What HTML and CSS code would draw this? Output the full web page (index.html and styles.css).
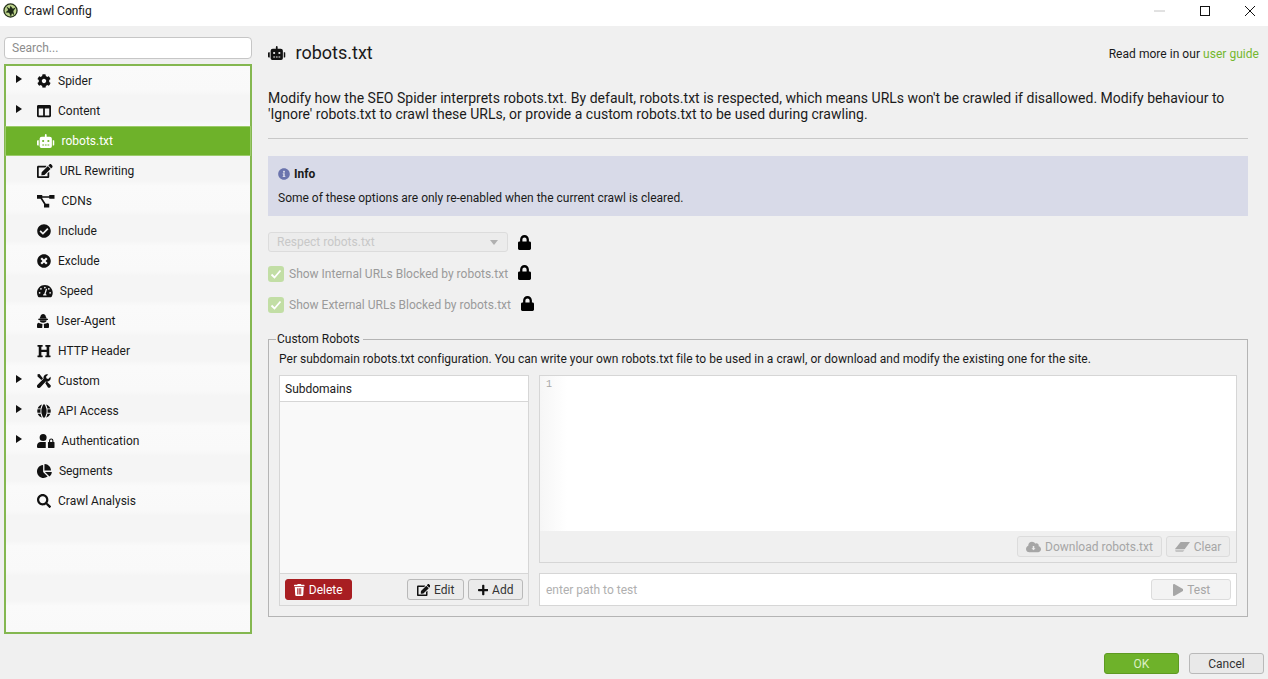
FILE: index.html
```html
<!DOCTYPE html>
<html lang="en">
<head>
<meta charset="utf-8">
<title>Crawl Config</title>
<link rel="stylesheet" href="styles.css">
</head>
<body>
<svg class="defs" aria-hidden="true">
  <defs>
    <symbol id="robot" viewBox="0 0 640 512"><path d="M32,224H64V416H32A31.96166,31.96166,0,0,1,0,384V256A31.96166,31.96166,0,0,1,32,224Zm512-48V448a64.06328,64.06328,0,0,1-64,64H160a64.06328,64.06328,0,0,1-64-64V176a79.974,79.974,0,0,1,80-80H288V32a32,32,0,0,1,64,0V96H464A79.974,79.974,0,0,1,544,176ZM264,256a40,40,0,1,0-40,40A39.997,39.997,0,0,0,264,256Zm-8,128H192v32h64Zm96,0H288v32h64ZM456,256a40,40,0,1,0-40,40A39.997,39.997,0,0,0,456,256Zm-8,128H384v32h64ZM640,256V384a31.96166,31.96166,0,0,1-32,32H576V224h32A31.96166,31.96166,0,0,1,640,256Z"/></symbol>
    <symbol id="edit" viewBox="0 0 576 512"><path d="M402.6 83.2l90.2 90.2c3.8 3.8 3.8 10 0 13.8L274.4 405.6l-92.8 10.3c-12.4 1.4-22.9-9.1-21.5-21.5l10.3-92.8L388.8 83.2c3.8-3.8 10-3.8 13.8 0zm162-22.9l-48.8-48.8c-15.2-15.2-39.9-15.2-55.2 0l-35.4 35.4c-3.8 3.8-3.8 10 0 13.8l90.2 90.2c3.8 3.8 10 3.8 13.8 0l35.4-35.4c15.2-15.3 15.2-40 0-55.2zM384 346.2V448H64V128h229.8c3.2 0 6.2-1.3 8.5-3.5l40-40c7.6-7.6 2.2-20.5-8.5-20.5H48C21.5 64 0 85.5 0 112v352c0 26.5 21.5 48 48 48h352c26.5 0 48-21.5 48-48V306.2c0-10.7-12.9-16-20.5-8.5l-40 40c-2.2 2.3-3.5 5.3-3.5 8.5z"/></symbol>
    <symbol id="lock" viewBox="0 0 448 512"><path d="M400 224h-24v-72C376 68.2 307.8 0 224 0S72 68.2 72 152v72H48c-26.5 0-48 21.5-48 48v192c0 26.5 21.5 48 48 48h352c26.5 0 48-21.5 48-48V272c0-26.5-21.5-48-48-48zm-104 0H152v-72c0-39.7 32.3-72 72-72s72 32.3 72 72v72z"/></symbol>
  </defs>
</svg>

<div class="app">
  <header class="titlebar">
    <div class="title">
      <svg class="logo" viewBox="0 0 16 16"><circle cx="8" cy="8" r="7" fill="#bcd28a" stroke="#26331c" stroke-width="1.400"/><path d="M8 3 10.500 6 14 4.500 11 8.500 12 13 9.500 11 8.500 15 6.500 10.500 2.500 10 5.500 7.500 3.500 3.500 7 6z" fill="#1d2a17"/></svg>
      <span>Crawl Config</span>
    </div>
    <div class="winctl">
      <svg viewBox="0 0 12 12"><path d="M0 6h11" stroke="#c4c4c4" fill="none"/></svg>
      <svg viewBox="0 0 12 12"><rect x="1.500" y="1.500" width="9" height="9" fill="none" stroke="#111"/></svg>
      <svg viewBox="0 0 12 12"><path d="M1 1l10 10M11 1L1 11" fill="none" stroke="#111"/></svg>
    </div>
  </header>

  <div class="content">
    <aside class="sidebar">
      <input class="search" type="text" placeholder="Search...">
      <ul class="tree">
        <li class="row"><span class="slot"><i class="arrow"></i></span><svg class="ico" viewBox="0 0 512 512"><path d="M487.4 315.7l-42.6-24.6c4.3-23.2 4.3-47 0-70.2l42.6-24.6c4.9-2.8 7.1-8.6 5.5-14-11.1-35.6-30-67.8-54.7-94.6-3.8-4.1-10-5.1-14.8-2.3L380.8 110c-17.9-15.4-38.5-27.3-60.8-35.1V25.8c0-5.6-3.9-10.5-9.4-11.7-36.7-8.2-74.3-7.8-109.2 0-5.5 1.2-9.4 6.1-9.4 11.7V75c-22.2 7.9-42.8 19.8-60.8 35.1L88.7 85.5c-4.9-2.8-11-1.9-14.8 2.3-24.7 26.7-43.6 58.9-54.7 94.6-1.7 5.4.6 11.2 5.5 14L67.3 221c-4.3 23.2-4.3 47 0 70.2l-42.6 24.6c-4.9 2.8-7.1 8.6-5.5 14 11.1 35.6 30 67.8 54.7 94.6 3.8 4.1 10 5.1 14.8 2.3l42.6-24.6c17.9 15.4 38.5 27.3 60.8 35.1v49.2c0 5.6 3.9 10.5 9.4 11.7 36.7 8.2 74.3 7.8 109.2 0 5.5-1.2 9.4-6.1 9.4-11.7v-49.2c22.2-7.9 42.8-19.8 60.8-35.1l42.6 24.6c4.9 2.8 11 1.9 14.8-2.3 24.7-26.7 43.6-58.9 54.7-94.6 1.5-5.5-.7-11.3-5.6-14.1zM256 336c-44.1 0-80-35.9-80-80s35.9-80 80-80 80 35.9 80 80-35.9 80-80 80z"/></svg>Spider</li>
        <li class="row"><span class="slot"><i class="arrow"></i></span><svg class="ico" viewBox="0 0 512 512"><path d="M464 32H48C21.49 32 0 53.49 0 80v352c0 26.51 21.49 48 48 48h416c26.51 0 48-21.49 48-48V80c0-26.51-21.49-48-48-48zM224 416H64V160h160v256zm224 0H288V160h160v256z"/></svg>Content</li>
        <li class="row selected"><span class="slot"></span><svg class="ico" viewBox="0 0 640 512"><use href="#robot"/></svg>robots.txt</li>
        <li class="row"><span class="slot"></span><svg class="ico" viewBox="0 0 576 512"><use href="#edit"/></svg>URL Rewriting</li>
        <li class="row"><span class="slot"></span><svg class="ico" viewBox="0 0 640 512"><path d="M0 32h192v144H0zM448 32h192v144H448zM256 352h192v144H256zM180 78h280v56H180zM130 170l56-28 140 220-56 28z"/></svg>CDNs</li>
        <li class="row"><span class="slot"></span><svg class="ico" viewBox="0 0 512 512"><path d="M504 256c0 136.967-111.033 248-248 248S8 392.967 8 256 119.033 8 256 8s248 111.033 248 248zM227.314 387.314l184-184c6.248-6.248 6.248-16.379 0-22.627l-22.627-22.627c-6.248-6.249-16.379-6.249-22.628 0L216 308.118l-70.059-70.059c-6.248-6.248-16.379-6.248-22.628 0l-22.627 22.627c-6.248 6.248-6.248 16.379 0 22.627l104 104c6.249 6.249 16.379 6.249 22.628.001z"/></svg>Include</li>
        <li class="row"><span class="slot"></span><svg class="ico" viewBox="0 0 512 512"><path d="M256 8C119 8 8 119 8 256s111 248 248 248 248-111 248-248S393 8 256 8zm121.6 313.1c4.7 4.7 4.7 12.3 0 17L338 377.6c-4.7 4.7-12.3 4.7-17 0L256 312l-65.1 65.6c-4.7 4.7-12.3 4.7-17 0L134.4 338c-4.7-4.7-4.7-12.3 0-17l65.6-65-65.6-65.1c-4.7-4.7-4.7-12.3 0-17l39.6-39.6c4.7-4.7 12.3-4.7 17 0l65 65.7 65.1-65.6c4.7-4.7 12.3-4.7 17 0l39.6 39.6c4.7 4.7 4.7 12.3 0 17L312 256l65.6 65.1z"/></svg>Exclude</li>
        <li class="row"><span class="slot"></span><svg class="ico" viewBox="0 0 576 512"><path fill-rule="evenodd" d="M288 32C129 32 0 161 0 320c0 53 14 103 39 146 6 10 17 14 28 14h442c11 0 22-4 28-14 25-43 39-93 39-146C576 161 447 32 288 32zM288 96a32 32 0 1 1 0 64 32 32 0 0 1 0-64zM144 144a32 32 0 1 1 0 64 32 32 0 0 1 0-64zM96 288a32 32 0 1 1 0 64 32 32 0 0 1 0-64zM352 416H224c0-30 18-55 44-60l50-166c4-13 18-20 31-16 13 4 20 18 16 31l-50 160c22 10 37 29 37 51zM480 288a32 32 0 1 1 0 64 32 32 0 0 1 0-64zM432 144a32 32 0 1 1 0 64 32 32 0 0 1 0-64z"/></svg>Speed</li>
        <li class="row"><span class="slot"></span><svg class="ico" viewBox="0 0 448 512"><path fill-rule="evenodd" d="M224 0c-50 0-88 30-100 100L90 160H358L324 100C312 30 274 0 224 0zM48 176H400V216H48zM96 232H352c0 55-50 90-128 90s-128-35-128-90zM60 322c30 15 50 24 70 28l70 20-10 142H40c-22 0-40-18-40-40v-70c0-36 24-66 60-80zM388 322c-30 15-50 24-70 28l-70 20 10 142h150c22 0 40-18 40-40v-70c0-36-24-66-60-80z"/></svg>User-Agent</li>
        <li class="row"><span class="slot"></span><svg class="ico" viewBox="0 0 512 512"><path d="M448 96v320h32a16 16 0 0 1 16 16v32a16 16 0 0 1-16 16H320a16 16 0 0 1-16-16v-32a16 16 0 0 1 16-16h32V288H160v128h32a16 16 0 0 1 16 16v32a16 16 0 0 1-16 16H32a16 16 0 0 1-16-16v-32a16 16 0 0 1 16-16h32V96H32a16 16 0 0 1-16-16V48a16 16 0 0 1 16-16h160a16 16 0 0 1 16 16v32a16 16 0 0 1-16 16h-32v112h192V96h-32a16 16 0 0 1-16-16V48a16 16 0 0 1 16-16h160a16 16 0 0 1 16 16v32a16 16 0 0 1-16 16z"/></svg>HTTP Header</li>
        <li class="row"><span class="slot"><i class="arrow"></i></span><svg class="ico" viewBox="0 0 512 512"><path d="M20 10l70-10 130 160-60 60L20 90zM350 10a130 130 0 0 1 60 10l-80 80 20 60 60 20 80-80a130 130 0 0 1-170 170L120 490a60 60 0 0 1-100-100L240 170A130 130 0 0 1 350 10zM300 330l60-60 130 130a64 64 0 0 1-90 90z"/></svg>Custom</li>
        <li class="row"><span class="slot"><i class="arrow"></i></span><svg class="ico" viewBox="0 0 512 512"><path d="M336 160C320 70 285 8 256 8s-64 62-80 152zM160 256c0 32 2 60 6 96h180c4-36 6-64 6-96s-2-60-6-96H166c-4 36-6 64-6 96zM488 160C460 90 400 36 328 16c26 36 44 88 52 144zM184 16C112 36 52 90 24 160h108c8-56 26-108 52-144zM496 192H384c2 32 2 96 0 128h112c10-40 10-88 0-128zM128 256c0-22 1-44 3-64H16c-10 40-10 88 0 128h115c-2-20-3-42-3-64zM176 352c16 90 51 152 80 152s64-62 80-152zM328 496c72-20 132-74 160-144H380c-8 56-26 108-52 144zM24 352c28 70 88 124 160 144-26-36-44-88-52-144z"/></svg>API Access</li>
        <li class="row"><span class="slot"><i class="arrow"></i></span><svg class="ico" viewBox="0 0 640 512"><path d="M224 256a128 128 0 1 0 0-256 128 128 0 0 0 0 256zM320 320c0-10 2-20 5-28H134C60 292 0 352 0 426v38c0 26 22 48 48 48h272zM624 288h-24v-48a80 80 0 0 0-160 0v48h-24c-9 0-16 7-16 16v192c0 9 7 16 16 16h208c9 0 16-7 16-16V304c0-9-7-16-16-16zM560 288h-80v-48a40 40 0 0 1 80 0z"/></svg>Authentication</li>
        <li class="row"><span class="slot"></span><svg class="ico" viewBox="0 0 544 512"><path d="M527 288H290l158 158c6 6 16 7 23 1 39-36 65-85 73-141 1-9-8-18-17-18zM512 224C504 105 407 8 288 0c-9-1-16 7-16 16v224h224c9 0 17-7 16-16zM224 288V51c0-9-8-17-17-16C88 52-4 155 0 279c4 128 114 233 242 233 50 0 97-16 135-43 8-5 8-16 2-23z"/></svg>Segments</li>
        <li class="row"><span class="slot"></span><svg class="ico" viewBox="0 0 512 512"><path d="M505 442.7L405.3 343c-4.5-4.5-10.6-7-17-7H372c27.6-35.3 44-79.7 44-128C416 93.1 322.9 0 208 0S0 93.1 0 208s93.1 208 208 208c48.3 0 92.7-16.4 128-44v16.3c0 6.4 2.5 12.5 7 17l99.7 99.7c9.4 9.4 24.6 9.4 33.9 0l28.3-28.3c9.4-9.4 9.4-24.6.1-34zM208 336c-70.7 0-128-57.2-128-128 0-70.7 57.2-128 128-128 70.7 0 128 57.2 128 128 0 70.7-57.2 128-128 128z"/></svg>Crawl Analysis</li>
      </ul>
    </aside>

    <main class="main">
      <div class="head">
        <h1 class="heading"><svg class="ico-h" viewBox="0 0 640 512"><use href="#robot"/></svg>robots.txt</h1>
        <p class="more">Read more in our <a href="#">user guide</a></p>
      </div>
      <p class="intro">Modify how the SEO Spider interprets robots.txt. By default, robots.txt is respected, which means URLs won't be crawled if disallowed. Modify behaviour to 'Ignore' robots.txt to crawl these URLs, or provide a custom robots.txt to be used during crawling.</p>
      <hr class="rule">
      <section class="info">
        <div class="info-title"><svg class="ico-info" viewBox="0 0 512 512"><path d="M256 8C119.043 8 8 119.083 8 256c0 136.997 111.043 248 248 248s248-111.003 248-248C504 119.083 392.957 8 256 8zm0 110c23.196 0 42 18.804 42 42s-18.804 42-42 42-42-18.804-42-42 18.804-42 42-42zm56 254c0 6.627-5.373 12-12 12h-88c-6.627 0-12-5.373-12-12v-24c0-6.627 5.373-12 12-12h12v-64h-12c-6.627 0-12-5.373-12-12v-24c0-6.627 5.373-12 12-12h64c6.627 0 12 5.373 12 12v100h12c6.627 0 12 5.373 12 12v24z"/></svg>Info</div>
        <div class="info-text">Some of these options are only re-enabled when the current crawl is cleared.</div>
      </section>

      <div class="option combo-row">
        <div class="combo"><span>Respect robots.txt</span><i class="combo-arrow"></i></div>
        <svg class="ico-lock" viewBox="0 0 448 512"><use href="#lock"/></svg>
      </div>
      <div class="option check-row">
        <span class="check"><svg viewBox="0 0 16 16"><path d="M3.500 8.500l3 3 6-7" fill="none" stroke="#fff" stroke-width="1.800"/></svg></span>
        <span class="check-label">Show Internal URLs Blocked by robots.txt</span>
        <svg class="ico-lock" viewBox="0 0 448 512"><use href="#lock"/></svg>
      </div>
      <div class="option check-row">
        <span class="check"><svg viewBox="0 0 16 16"><path d="M3.500 8.500l3 3 6-7" fill="none" stroke="#fff" stroke-width="1.800"/></svg></span>
        <span class="check-label">Show External URLs Blocked by robots.txt</span>
        <svg class="ico-lock" viewBox="0 0 448 512"><use href="#lock"/></svg>
      </div>

      <fieldset class="group">
        <legend>Custom Robots</legend>
        <p class="group-text">Per subdomain robots.txt configuration. You can write your own robots.txt file to be used in a crawl, or download and modify the existing one for the site.</p>
        <div class="panes">
          <div class="subdomains">
            <div class="sub-head">Subdomains</div>
            <div class="sub-list"></div>
            <div class="sub-foot">
              <button class="btn btn-danger"><svg class="ico-btn" viewBox="0 0 448 512"><path d="M432 32H312l-9.400-18.700A24 24 0 0 0 281.100 0H166.800a23.720 23.720 0 0 0-21.400 13.300L136 32H16A16 16 0 0 0 0 48v32a16 16 0 0 0 16 16h416a16 16 0 0 0 16-16V48a16 16 0 0 0-16-16zM53.200 467a48 48 0 0 0 47.900 45h245.800a48 48 0 0 0 47.900-45L416 128H32zM140 180v270h40V180zM204 180v270h40V180zM268 180v270h40V180z" fill-rule="evenodd"/></svg>Delete</button>
              <span class="spacer"></span>
              <button class="btn btn-edit"><svg class="ico-btn" viewBox="0 0 576 512"><use href="#edit"/></svg>Edit</button>
              <button class="btn btn-add"><svg class="ico-btn" viewBox="0 0 448 512"><path d="M416 208H272V64c0-17.670-14.330-32-32-32h-32c-17.670 0-32 14.330-32 32v144H32c-17.670 0-32 14.330-32 32v32c0 17.670 14.330 32 32 32h144v144c0 17.670 14.330 32 32 32h32c17.670 0 32-14.330 32-32V304h144c17.670 0 32-14.330 32-32v-32c0-17.670-14.330-32-32-32z"/></svg>Add</button>
            </div>
          </div>
          <div class="editor-col">
            <div class="editor">
              <div class="code"><span class="gutter">1</span></div>
              <div class="editor-foot">
                <button class="btn btn-off btn-download"><svg class="ico-btn" viewBox="0 0 640 512"><path fill-rule="evenodd" d="M537.600 226.600c4.100-10.700 6.400-22.400 6.400-34.600 0-53-43-96-96-96-19.700 0-38.100 6-53.300 16.200C367 64.200 315.300 32 256 32c-88.400 0-160 71.600-160 160 0 2.700.1 5.400.2 8.100C40.200 219.800 0 273.200 0 336c0 79.500 64.500 144 144 144h368c70.700 0 128-57.300 128-128 0-61.900-44-113.600-102.400-125.400zM288 208v96h-56l88 88 88-88h-56v-96z"/></svg>Download robots.txt</button>
                <button class="btn btn-off btn-clear"><svg class="ico-btn" viewBox="0 0 640 512"><path d="M240 40h400L420 340H0z"/><path d="M0 360h410l-70 110H30z" opacity=".55"/></svg>Clear</button>
              </div>
            </div>
            <div class="test-bar">
              <input class="test-input" type="text" placeholder="enter path to test">
              <button class="btn btn-off btn-test"><svg class="ico-btn" viewBox="0 0 448 512"><path d="M424.400 214.700L72.400 6.600C43.800-10.300 0 6.100 0 47.900V464c0 37.500 40.700 60.100 72.400 41.300l352-208c31.400-18.500 31.500-64.100 0-82.600z"/></svg>Test</button>
            </div>
          </div>
        </div>
      </fieldset>
    </main>
  </div>

  <footer class="actions">
    <button class="btn-action btn-ok">OK</button>
    <button class="btn-action">Cancel</button>
  </footer>
</div>
</body>
</html>
```

FILE: styles.css
```css
* { box-sizing: border-box; }
html, body { margin: 0; padding: 0; }
body {
  width: 1268px;
  height: 679px;
  overflow: hidden;
  background: #f0f0f0;
  color: #1a1a1a;
  font: 12px/16px Roboto, "Liberation Sans", sans-serif;
}
.defs { display: none; }
.app { display: flex; flex-direction: column; height: 679px; }

.titlebar {
  height: 26px;
  flex: none;
  background: #fff;
  display: flex;
  justify-content: space-between;
  align-items: center;
  padding: 0 12px 5px 3px;
}
.title { display: flex; align-items: center; gap: 6px; }
.logo { width: 15px; height: 15px; }
.winctl { display: flex; gap: 33px; }
.winctl svg { width: 12px; height: 12px; display: block; }

.content { flex: 1; display: flex; min-height: 0; }
.sidebar { width: 248px; margin: 11px 0 0 4px; flex: none; display: flex; flex-direction: column; }
.search {
  width: 248px;
  height: 22px;
  border: 1px solid #c6c6c6;
  border-radius: 4px;
  background: #fff;
  padding: 0 7px;
  font: inherit;
  color: #222;
  outline: none;
}
.search::placeholder { color: #8c8c8c; opacity: 1; }
.tree {
  list-style: none;
  margin: 5px 0 0;
  padding: 0;
  height: 570px;
  border: 2px solid #84b750;
  background: repeating-linear-gradient(#fafafa 0, #f9f9f9 24px, #f5f5f5 30px, #f5f5f5 54px, #fafafa 60px);
}
.row { height: 30px; display: flex; align-items: center; color: #1a1a1a; margin-top: 0; }
.slot { width: 31px; flex: none; display: flex; }
.arrow {
  margin: -4px 0 0 10px;
  width: 0;
  height: 0;
  border-left: 6px solid #111;
  border-top: 4.5px solid transparent;
  border-bottom: 4.5px solid transparent;
}
.ico { height: 14px; width: auto; margin-right: 7px; flex: none; fill: #111; margin-top: -1px; }
.selected { background: #6eb22a; color: #fff; border: 1px solid #9ccb6a; margin: 0 -1px 0 -1px; padding-left: 1px; }
.selected .slot { width: 30px; }
.selected .ico { fill: #fff; }

.main { width: 1000px; margin-left: 16px; padding-right: 20px; flex: none; }
.head { display: flex; justify-content: space-between; align-items: center; height: 24px; margin: 15px -11px 0 0; }
.heading { margin: 0; font-size: 18px; font-weight: 400; line-height: 24px; display: flex; align-items: center; }
.ico-h { height: 14px; width: auto; margin-right: 10px; fill: #111; }
.more { margin: 2px 0 0; letter-spacing: .003em; }
.more a { color: #74b72e; text-decoration: none; }
.intro { margin: 25px 0 0; font-size: 14px; line-height: 16px; width: 980px; letter-spacing: .001em; }
.rule { margin: 16px 0 0; height: 1px; border: 0; background: #c8c8c8; }
.info { margin-top: 17px; height: 60px; background: #d8dae8; padding: 10px 10px 0; }
.info-title { font-weight: 700; display: flex; align-items: center; height: 16px; }
.ico-info { width: 12px; height: 12px; margin-right: 4px; fill: #6b74ad; }
.info-text { margin-top: 8px; }

.option { display: flex; align-items: center; color: #9a9a9a; }
.combo-row { margin-top: 16px; height: 20px; }
.combo {
  width: 240px;
  height: 20px;
  border: 1px solid #dcdcdc;
  border-radius: 3px;
  background: #ececec;
  display: flex;
  align-items: center;
  justify-content: space-between;
  padding: 0 9px 0 8px;
  color: #c8c8c8;
}
.combo-arrow {
  width: 0;
  height: 0;
  border-top: 5px solid #b0b0b0;
  border-left: 4.5px solid transparent;
  border-right: 4.5px solid transparent;
}
.ico-lock { width: 13px; height: 15px; fill: #000; margin-left: 10px; flex: none; }
.check-row { height: 16px; margin-top: 14px; }
.check-row + .check-row { margin-top: 15px; }
.check { width: 16px; height: 16px; background: #c2dea5; border-radius: 3px; flex: none; margin-right: 5px; display: block; }
.check svg { display: block; width: 16px; height: 16px; }
.check-row .ico-lock { margin-top: -4px; margin-left: 10px; }

.group {
  margin: 18px 0 0;
  padding: 4px 10px 0;
  width: 980px;
  height: 286px;
  border: 1px solid #b4b4b4;
  min-width: 0;
}
.group legend { padding: 0 3px 0 1px; margin-left: -3px; line-height: 16px; }
.group-text { margin: 0; letter-spacing: .0012em; }
.panes { display: flex; gap: 10px; margin-top: 8px; }
.subdomains { width: 250px; height: 231px; border: 1px solid #d6d6d6; display: flex; flex-direction: column; background: #f9f9f9; flex: none; }
.sub-head { height: 26px; background: #fff; border-bottom: 1px solid #d6d6d6; padding: 5px 5px 0; }
.sub-list { flex: 1; }
.sub-foot { height: 32px; background: #f0f0f0; border-top: 1px solid #d6d6d6; display: flex; align-items: center; padding: 0 5px; gap: 4px; }
.spacer { flex: 1; }
.btn {
  height: 21px;
  padding: 0 9px;
  border: 1px solid #b9b9b9;
  border-radius: 3px;
  background: #ebebeb;
  color: #333;
  font: inherit;
  display: inline-flex;
  align-items: center;
  justify-content: center;
}
.ico-btn { height: 12px; width: auto; margin-right: 4px; fill: currentColor; flex: none; }
.btn-danger { background: #a81e22; border-color: #a81e22; color: #fff; width: 67px; padding: 0; }
.btn-edit { width: 57px; padding: 0; }
.btn-add { width: 55px; padding: 0; }
.sub-foot .btn-edit .ico-btn, .sub-foot .btn-add .ico-btn { fill: #111; }
.editor-col { flex: 1; display: flex; flex-direction: column; gap: 10px; min-width: 0; }
.editor { height: 188px; border: 1px solid #d6d6d6; display: flex; flex-direction: column; background: #f0f0f0; }
.code { height: 155px; background: #fff; display: flex; flex: none; }
.gutter { width: 27px; padding: 1px 0 0 6px; background: linear-gradient(90deg, #f6f6f6, #fff); color: #a8a8a8; font: 10px/16px "Liberation Mono", monospace; }
.editor-foot { flex: 1; display: flex; justify-content: flex-end; align-items: center; gap: 4px; padding: 0 6px 0 0; }
.btn-off { background: #ececec; border-color: #dcdcdc; color: #a6a6a6; }
.btn-download { width: 145px; padding: 0; }
.btn-clear { width: 64px; padding: 0; }
.test-bar { height: 33px; background: #fff; border: 1px solid #d6d6d6; display: flex; align-items: center; justify-content: space-between; padding: 0 5px 0 6px; }
.test-input { border: 0; outline: 0; background: transparent; font: inherit; flex: 1; padding: 0; color: #333; }
.test-input::placeholder { color: #b0b0b0; opacity: 1; }
.btn-test { width: 80px; background: #f3f3f3; padding: 0 0 0 1px; }

.actions { height: 26px; flex: none; display: flex; justify-content: flex-end; gap: 10px; padding: 0 4px 5px 0; align-items: flex-end; }
.btn-action { width: 75px; height: 21px; border: 1px solid #b9b9b9; border-radius: 3px; background: #e9e9e9; color: #333; font: inherit; padding: 0; }
.btn-ok { background: #6eb22a; border-color: #5e9a22; color: #dcefc4; }
```
